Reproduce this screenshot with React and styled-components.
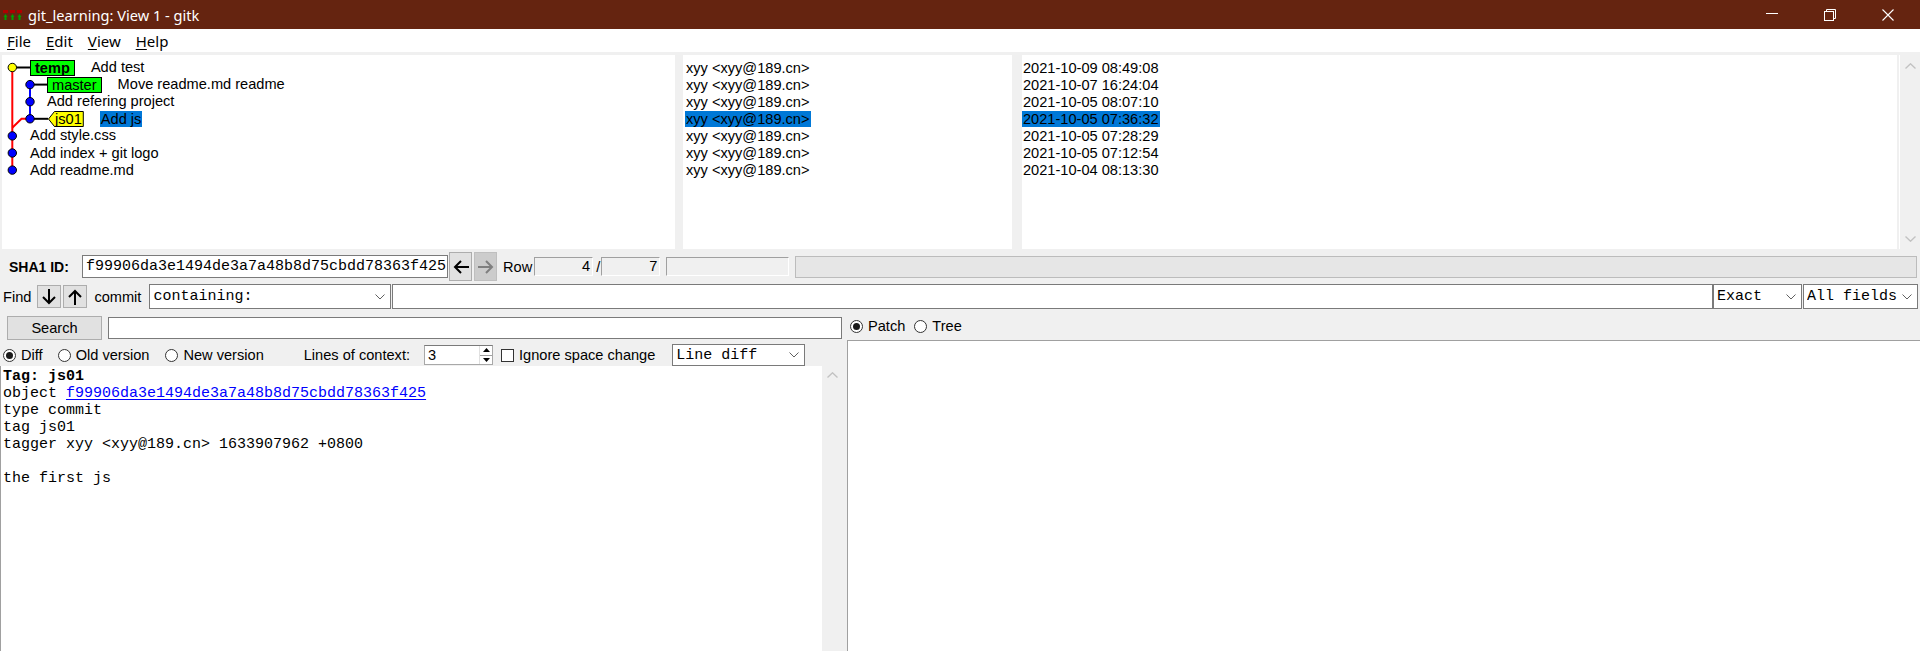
import React from "react";
import styled, { createGlobalStyle } from "styled-components";

const sans = `"Liberation Sans", Arial, sans-serif`;
const mono = `"Liberation Mono", "Courier New", monospace`;
const ui = `"Segoe UI", "Noto Sans", sans-serif`;

const GlobalStyle = createGlobalStyle`
  html, body { margin: 0; padding: 0; background: #f0f0f0; overflow: hidden; }
  body { font-family: ${sans}; color: #000; }
  #root { width: 1920px; height: 651px; }
  * { box-sizing: border-box; }
`;

const Window = styled.div`
  width: 1920px;
  height: 651px;
  display: flex;
  flex-direction: column;
  background: #f0f0f0;
  overflow: hidden;
  font-size: 14.6px;
`;

/* ---------- title bar ---------- */
const TitleBar = styled.div`
  flex: none;
  height: 29px;
  background: #652410;
  color: #fff;
  display: flex;
  align-items: center;
  font-family: ${ui};
  font-size: 14.6px;
`;
const IconBox = styled.div`
  display: flex;
  margin-left: 3px;
  width: 19px;
`;
const TitleText = styled.span`
  margin-left: 6px;
  white-space: nowrap;
`;
const WinControls = styled.div`
  margin-left: auto;
  margin-right: 3px;
  height: 100%;
  display: flex;
`;
const WinButton = styled.div`
  width: 58px;
  height: 100%;
  display: flex;
  align-items: center;
  justify-content: center;
`;

const AppIcon = () => (
  <svg width="19" height="10" viewBox="0 0 19 10">
    <rect x="0" y="0" width="5" height="3" fill="#b00000" />
    <rect x="7" y="0" width="5" height="3" fill="#b00000" />
    <rect x="14" y="0" width="5" height="3" fill="#b00000" />
    <path d="M2.5 4L0.5 7H4.5Z M9.5 4L7.5 7H11.5Z M16.5 4L14.5 7H18.5Z" fill="#00a000" />
    <rect x="1.5" y="7" width="2" height="3" fill="#00a000" />
    <rect x="8.5" y="7" width="2" height="3" fill="#00a000" />
    <rect x="15.5" y="7" width="2" height="3" fill="#00a000" />
  </svg>
);

/* ---------- menu ---------- */
const MenuBar = styled.div`
  flex: none;
  height: 23px;
  background: #fff;
  display: flex;
  align-items: center;
  padding-left: 7px;
  gap: 15px;
  font-family: ${ui};
  font-size: 15px;
`;
const MenuItem = styled.span`
  white-space: nowrap;
`;
const Mnemonic = styled.span`
  text-decoration: underline;
  text-underline-offset: 2px;
`;

/* ---------- top panes ---------- */
const TopPanes = styled.div`
  flex: none;
  margin-top: 3px;
  height: 194px;
  display: flex;
  padding-left: 2px;
`;
const Pane = styled.div`
  position: relative;
  background: #fff;
  width: ${(p) => (p.$width ? `${p.$width}px` : "auto")};
  flex: ${(p) => (p.$width ? "none" : "1")};
  margin-left: ${(p) => p.$ml || 0}px;
  padding-left: ${(p) => p.$pl || 0}px;
  overflow: hidden;
`;
const RowList = styled.div`
  position: relative;
  padding-top: 4px;
`;
const ListRow = styled.div`
  height: 17.1px;
  display: flex;
  align-items: center;
  padding-left: ${(p) => p.$indent || 0}px;
  white-space: nowrap;
  line-height: 17px;
`;
const RefTag = styled.span`
  display: inline-flex;
  align-items: center;
  height: 16px;
  line-height: 14px;
  padding: 0 4px;
  border: 1px solid #000;
  background: ${(p) => p.$bg};
  font-weight: ${(p) => (p.$bold ? "bold" : "normal")};
  margin-right: 16px;
`;
const ArrowTag = styled.span`
  position: relative;
  display: inline-flex;
  align-items: center;
  height: 16px;
  line-height: 14px;
  padding: 0 2px 0 7px;
  margin-right: 16px;
`;
const ArrowTagShape = styled.svg`
  position: absolute;
  left: 0;
  top: 0;
  width: 100%;
  height: 100%;
`;
const ArrowTagText = styled.span`
  position: relative;
`;
const Selected = styled.span`
  display: inline-block;
  line-height: 16px;
  height: 16px;
  padding: 0 1px;
  background: ${(p) => (p.$on ? "#0078d7" : "transparent")};
`;
const GraphCanvas = styled.svg`
  position: absolute;
  left: 0;
  top: 0;
  pointer-events: none;
`;
const ScrollbarV = styled.div`
  flex: none;
  width: ${(p) => p.$width || 21}px;
  margin-left: ${(p) => p.$ml || 0}px;
  border-left: ${(p) => (p.$edge ? "1px solid #fff" : "none")};
  background: #f0f0f0;
  display: flex;
  flex-direction: column;
  align-items: center;
  justify-content: space-between;
  padding: 8px 0 7px;
`;

const Chevron = ({ up, color = "#c2c2c2" }) => (
  <svg width="11" height="6" viewBox="0 0 11 6">
    <polyline
      points={up ? "0.5,5.5 5.5,0.8 10.5,5.5" : "0.5,0.5 5.5,5.2 10.5,0.5"}
      fill="none"
      stroke={color}
      strokeWidth="1.4"
    />
  </svg>
);

/* ---------- sha row ---------- */
const ShaRow = styled.div`
  flex: none;
  margin-top: 2px;
  height: 31px;
  display: flex;
  align-items: center;
`;
const ShaLabel = styled.span`
  width: 82px;
  padding-left: 9px;
  font-weight: bold;
  font-size: 14px;
  white-space: nowrap;
`;
const Entry = styled.div`
  flex: ${(p) => (p.$width ? "none" : "1")};
  width: ${(p) => (p.$width ? `${p.$width}px` : "auto")};
  height: ${(p) => p.$height || 22}px;
  margin-left: ${(p) => p.$ml || 0}px;
  background: #fff;
  border: 1px solid #7a7a7a;
  display: flex;
  align-items: center;
  padding-left: 3px;
  font-family: ${mono};
  font-size: 15px;
  white-space: nowrap;
  overflow: hidden;
`;
const NavButton = styled.div`
  flex: none;
  width: 23px;
  height: 29px;
  margin-left: ${(p) => p.$ml || 0}px;
  background: ${(p) => (p.$disabled ? "#cccccc" : "#e1e1e1")};
  border: 1px solid ${(p) => (p.$disabled ? "#bfbfbf" : "#adadad")};
  display: flex;
  align-items: center;
  justify-content: center;
`;
const PlainLabel = styled.span`
  margin-left: ${(p) => p.$ml || 0}px;
  white-space: nowrap;
`;
const CountField = styled.div`
  flex: none;
  width: ${(p) => p.$width}px;
  height: 19px;
  margin-left: ${(p) => p.$ml || 0}px;
  border-top: 1px solid #a0a0a0;
  border-left: 1px solid #a0a0a0;
  border-right: 1px solid #ffffff;
  border-bottom: 1px solid #ffffff;
  display: flex;
  align-items: center;
  justify-content: flex-end;
  padding-right: 2px;
  line-height: 17px;
`;
const Progress = styled.div`
  flex: 1;
  height: 22px;
  margin-left: 6px;
  margin-right: 3px;
  background: #e6e6e6;
  border: 1px solid #bcbcbc;
`;

/* ---------- find row ---------- */
const FindRow = styled.div`
  flex: none;
  height: 29px;
  display: flex;
  align-items: center;
  padding-left: 3px;
  padding-right: 2px;
`;
const ArrowButton = styled.div`
  flex: none;
  width: 24px;
  height: 23px;
  margin-left: ${(p) => p.$ml || 0}px;
  background: #e1e1e1;
  border: 1px solid #adadad;
  display: flex;
  align-items: center;
  justify-content: center;
`;
const Combo = styled.div`
  flex: none;
  width: ${(p) => p.$width}px;
  height: ${(p) => p.$height || 25}px;
  margin-left: ${(p) => p.$ml || 0}px;
  background: #fff;
  border: 1px solid #7a7a7a;
  display: flex;
  align-items: center;
  padding-left: 3px;
  padding-right: 5px;
  font-family: ${mono};
  font-size: 15px;
  white-space: nowrap;
`;
const ComboText = styled.span`
  flex: 1;
  overflow: hidden;
`;

/* ---------- lower area ---------- */
const Lower = styled.div`
  flex: 1;
  display: flex;
  min-height: 0;
  padding-top: 1px;
`;
const LeftColumn = styled.div`
  flex: none;
  width: 843px;
  display: flex;
  flex-direction: column;
`;
const SearchRow = styled.div`
  flex: none;
  height: 32px;
  display: flex;
  align-items: center;
  padding-left: 7px;
`;
const PushButton = styled.div`
  flex: none;
  width: 95px;
  height: 24px;
  background: #e1e1e1;
  border: 1px solid #adadad;
  display: flex;
  align-items: center;
  justify-content: center;
`;
const OptionsRow = styled.div`
  flex: none;
  height: 22px;
  display: flex;
  align-items: center;
  padding-left: 3px;
`;
const RadioLabel = styled.label`
  display: inline-flex;
  align-items: center;
  gap: 5px;
  margin-left: ${(p) => p.$ml || 0}px;
  white-space: nowrap;
`;
const RadioCircle = styled.span`
  flex: none;
  width: 13px;
  height: 13px;
  border-radius: 50%;
  border: 1px solid #333;
  background: #fff;
  display: inline-flex;
  align-items: center;
  justify-content: center;
  &::after {
    content: "";
    width: 7px;
    height: 7px;
    border-radius: 50%;
    background: ${(p) => (p.$checked ? "#1a1a1a" : "transparent")};
  }
`;
const Spinbox = styled.div`
  flex: none;
  width: 69px;
  height: 20px;
  margin-left: 14px;
  background: #fff;
  border: 1px solid #a8a8a8;
  border-top-color: #7a7a7a;
  display: flex;
  align-items: center;
  padding-left: 3px;
`;
const SpinValue = styled.span`
  flex: 1;
`;
const SpinArrows = styled.div`
  flex: none;
  width: 13px;
  height: 100%;
  display: flex;
  flex-direction: column;
  border-left: 1px solid #e0e0e0;
`;
const SpinHalf = styled.div`
  flex: 1;
  display: flex;
  align-items: center;
  justify-content: center;
  border-bottom: ${(p) => (p.$top ? "1px solid #a0a0a0" : "none")};
`;
const CheckBox = styled.span`
  flex: none;
  width: 13px;
  height: 13px;
  border: 1px solid #333;
  background: #fff;
`;
const CheckLabel = styled.label`
  display: inline-flex;
  align-items: center;
  gap: 5px;
  margin-left: 8px;
  white-space: nowrap;
`;
const DiffArea = styled.div`
  flex: 1;
  display: flex;
  min-height: 0;
`;
const DiffText = styled.div`
  flex: 1;
  background: #fff;
  border-left: 1px solid #a0a0a0;
  padding: 2px 0 0 2px;
  font-family: ${mono};
  font-size: 15px;
  overflow: hidden;
`;
const DiffLine = styled.div`
  height: 17px;
  line-height: 17px;
  white-space: pre;
  font-weight: ${(p) => (p.$bold ? "bold" : "normal")};
`;
const Link = styled.span`
  color: #0000ff;
  text-decoration: underline;
  text-underline-offset: 2px;
`;
const DiffScroll = styled.div`
  flex: none;
  width: 21px;
  display: flex;
  justify-content: center;
  padding-top: 6px;
`;
const RightColumn = styled.div`
  flex: 1;
  margin-left: 4px;
  display: flex;
  flex-direction: column;
`;
const RadioRow = styled.div`
  flex: none;
  height: 28px;
  display: flex;
  align-items: center;
  padding-left: 3px;
`;
const FileList = styled.div`
  flex: 1;
  background: #fff;
  border-left: 1px solid #a0a0a0;
  border-top: 1px solid #a0a0a0;
`;

/* ---------- icons ---------- */
const HArrow = ({ dir = "left", color = "#000" }) => (
  <svg width="16" height="14" viewBox="0 0 16 14">
    <path
      d={dir === "left" ? "M16 7H2M8 1L2 7l6 6" : "M0 7h14M8 1l6 6-6 6"}
      fill="none"
      stroke={color}
      strokeWidth="2"
    />
  </svg>
);
const VArrow = ({ dir = "down" }) => (
  <svg width="14" height="16" viewBox="0 0 14 16">
    <path
      d={dir === "down" ? "M7 0v14M1 8l6 6 6-6" : "M7 16V2M1 8l6-6 6 6"}
      fill="none"
      stroke="#000"
      strokeWidth="2"
    />
  </svg>
);
const SmallChevron = () => (
  <svg width="10" height="6" viewBox="0 0 10 6">
    <polyline points="0.5,0.5 5,5 9.5,0.5" fill="none" stroke="#606060" strokeWidth="1" />
  </svg>
);
const Tri = ({ up }) => (
  <svg width="7" height="4" viewBox="0 0 7 4">
    <path d={up ? "M0 4L3.5 0L7 4Z" : "M0 0L3.5 4L7 0Z"} fill="#000" />
  </svg>
);

/* ---------- data ---------- */
const authors = Array.from({ length: 7 }, () => "xyy <xyy@189.cn>");
const dates = [
  "2021-10-09 08:49:08",
  "2021-10-07 16:24:04",
  "2021-10-05 08:07:10",
  "2021-10-05 07:36:32",
  "2021-10-05 07:28:29",
  "2021-10-05 07:12:54",
  "2021-10-04 08:13:30",
];
const SELECTED = 3;

const rowY = (i) => 12.5 + 17.1 * i;

const Graph = () => (
  <GraphCanvas width="60" height="194" viewBox="0 0 60 194">
    <line x1="10.3" y1={rowY(0)} x2="10.3" y2={rowY(6)} stroke="#ff0000" strokeWidth="2" />
    <polyline
      points={`28,${rowY(3)} 19.5,${rowY(3)} 10.3,${rowY(3) + 9}`}
      fill="none"
      stroke="#ff0000"
      strokeWidth="2"
    />
    <line x1="28" y1={rowY(1)} x2="28" y2={rowY(3)} stroke="#0000ff" strokeWidth="2" />
    <line x1="10.3" y1={rowY(0)} x2="28" y2={rowY(0)} stroke="#000" strokeWidth="2" />
    <line x1="28" y1={rowY(1)} x2="45" y2={rowY(1)} stroke="#000" strokeWidth="2" />
    <line x1="28" y1={rowY(3)} x2="46" y2={rowY(3)} stroke="#000" strokeWidth="2" />
    <circle cx="10.3" cy={rowY(0)} r="4.2" fill="#ffff00" stroke="#000" strokeWidth="1" />
    {[1, 2, 3].map((i) => (
      <circle key={i} cx="28" cy={rowY(i)} r="4.2" fill="#0000ff" stroke="#000" strokeWidth="1" />
    ))}
    {[4, 5, 6].map((i) => (
      <circle key={i} cx="10.3" cy={rowY(i)} r="4.2" fill="#0000ff" stroke="#000" strokeWidth="1" />
    ))}
  </GraphCanvas>
);

export default function App() {
  return (
    <Window>
      <GlobalStyle />
      <TitleBar>
        <IconBox>
          <AppIcon />
        </IconBox>
        <TitleText>git_learning: View 1 - gitk</TitleText>
        <WinControls>
          <WinButton>
            <svg width="12" height="12" viewBox="0 0 12 12">
              <line x1="0" y1="4.5" x2="12" y2="4.5" stroke="#fff" strokeWidth="1" />
            </svg>
          </WinButton>
          <WinButton>
            <svg width="12" height="12" viewBox="0 0 12 12">
              <rect x="0.5" y="2.5" width="9" height="9" fill="none" stroke="#fff" />
              <path d="M2.5 2.5V0.5H11.5V9.5H9.5" fill="none" stroke="#fff" />
            </svg>
          </WinButton>
          <WinButton>
            <svg width="12" height="12" viewBox="0 0 12 12">
              <path d="M0.5 0.5L11.5 11.5M11.5 0.5L0.5 11.5" stroke="#fff" strokeWidth="1.1" />
            </svg>
          </WinButton>
        </WinControls>
      </TitleBar>

      <MenuBar>
        <MenuItem><Mnemonic>F</Mnemonic>ile</MenuItem>
        <MenuItem><Mnemonic>E</Mnemonic>dit</MenuItem>
        <MenuItem><Mnemonic>V</Mnemonic>iew</MenuItem>
        <MenuItem><Mnemonic>H</Mnemonic>elp</MenuItem>
      </MenuBar>

      <TopPanes>
        <Pane $width={673}>
          <RowList>
            <ListRow $indent={28}>
              <RefTag $bg="#00ff00" $bold>temp</RefTag>
              <span>Add test</span>
            </ListRow>
            <ListRow $indent={45}>
              <RefTag $bg="#00ff00">master</RefTag>
              <span>Move readme.md readme</span>
            </ListRow>
            <ListRow $indent={45}>
              <span>Add refering project</span>
            </ListRow>
            <ListRow $indent={46}>
              <ArrowTag>
                <ArrowTagShape viewBox="0 0 36 16" preserveAspectRatio="none">
                  <polygon
                    points="0.5,8 6.5,0.5 35.5,0.5 35.5,15.5 6.5,15.5"
                    fill="#ffff00"
                    stroke="#000"
                    strokeWidth="1"
                  />
                </ArrowTagShape>
                <ArrowTagText>js01</ArrowTagText>
              </ArrowTag>
              <Selected $on>Add js</Selected>
            </ListRow>
            <ListRow $indent={28}>
              <span>Add style.css</span>
            </ListRow>
            <ListRow $indent={28}>
              <span>Add index + git logo</span>
            </ListRow>
            <ListRow $indent={28}>
              <span>Add readme.md</span>
            </ListRow>
            <Graph />
          </RowList>
        </Pane>
        <Pane $width={329} $ml={8} $pl={2}>
          <RowList>
            {authors.map((a, i) => (
              <ListRow key={i}>
                <Selected $on={i === SELECTED}>{a}</Selected>
              </ListRow>
            ))}
          </RowList>
        </Pane>
        <Pane $ml={10}>
          <RowList>
            {dates.map((d, i) => (
              <ListRow key={i}>
                <Selected $on={i === SELECTED}>{d}</Selected>
              </ListRow>
            ))}
          </RowList>
        </Pane>
        <ScrollbarV $ml={2} $edge>
          <Chevron up />
          <Chevron />
        </ScrollbarV>
      </TopPanes>

      <ShaRow>
        <ShaLabel>SHA1 ID:</ShaLabel>
        <Entry $width={366} $height={23}>f99906da3e1494de3a7a48b8d75cbdd78363f425</Entry>
        <NavButton $ml={1}>
          <HArrow dir="left" />
        </NavButton>
        <NavButton $ml={2} $disabled>
          <HArrow dir="right" color="#7f7f7f" />
        </NavButton>
        <PlainLabel $ml={6}>Row</PlainLabel>
        <CountField $width={59} $ml={2}>4</CountField>
        <PlainLabel $ml={3}>/</PlainLabel>
        <CountField $width={59} $ml={1}>7</CountField>
        <CountField $width={123} $ml={6} />
        <Progress />
      </ShaRow>

      <FindRow>
        <PlainLabel>Find</PlainLabel>
        <ArrowButton $ml={6}>
          <VArrow dir="down" />
        </ArrowButton>
        <ArrowButton $ml={2}>
          <VArrow dir="up" />
        </ArrowButton>
        <PlainLabel $ml={7}>commit</PlainLabel>
        <Combo $width={242} $ml={8}>
          <ComboText>containing:</ComboText>
          <SmallChevron />
        </Combo>
        <Entry $height={25} $ml={1} />
        <Combo $width={89}>
          <ComboText>Exact</ComboText>
          <SmallChevron />
        </Combo>
        <Combo $width={115} $ml={1}>
          <ComboText>All fields</ComboText>
          <SmallChevron />
        </Combo>
      </FindRow>

      <Lower>
        <LeftColumn>
          <SearchRow>
            <PushButton>Search</PushButton>
            <Entry $width={734} $height={22} $ml={6} />
          </SearchRow>
          <OptionsRow>
            <RadioLabel>
              <RadioCircle $checked />
              Diff
            </RadioLabel>
            <RadioLabel $ml={15}>
              <RadioCircle />
              Old version
            </RadioLabel>
            <RadioLabel $ml={16}>
              <RadioCircle />
              New version
            </RadioLabel>
            <PlainLabel $ml={40}>Lines of context:</PlainLabel>
            <Spinbox>
              <SpinValue>3</SpinValue>
              <SpinArrows>
                <SpinHalf $top>
                  <Tri up />
                </SpinHalf>
                <SpinHalf>
                  <Tri />
                </SpinHalf>
              </SpinArrows>
            </Spinbox>
            <CheckLabel>
              <CheckBox />
              Ignore space change
            </CheckLabel>
            <Combo $width={133} $height={22} $ml={17}>
              <ComboText>Line diff</ComboText>
              <SmallChevron />
            </Combo>
          </OptionsRow>
          <DiffArea>
            <DiffText>
              <DiffLine $bold>Tag: js01</DiffLine>
              <DiffLine>
                object <Link>f99906da3e1494de3a7a48b8d75cbdd78363f425</Link>
              </DiffLine>
              <DiffLine>type commit</DiffLine>
              <DiffLine>tag js01</DiffLine>
              <DiffLine>tagger xyy &lt;xyy@189.cn&gt; 1633907962 +0800</DiffLine>
              <DiffLine> </DiffLine>
              <DiffLine>the first js</DiffLine>
            </DiffText>
            <DiffScroll>
              <Chevron up />
            </DiffScroll>
          </DiffArea>
        </LeftColumn>
        <RightColumn>
          <RadioRow>
            <RadioLabel>
              <RadioCircle $checked />
              Patch
            </RadioLabel>
            <RadioLabel $ml={9}>
              <RadioCircle />
              Tree
            </RadioLabel>
          </RadioRow>
          <FileList />
        </RightColumn>
      </Lower>
    </Window>
  );
}
